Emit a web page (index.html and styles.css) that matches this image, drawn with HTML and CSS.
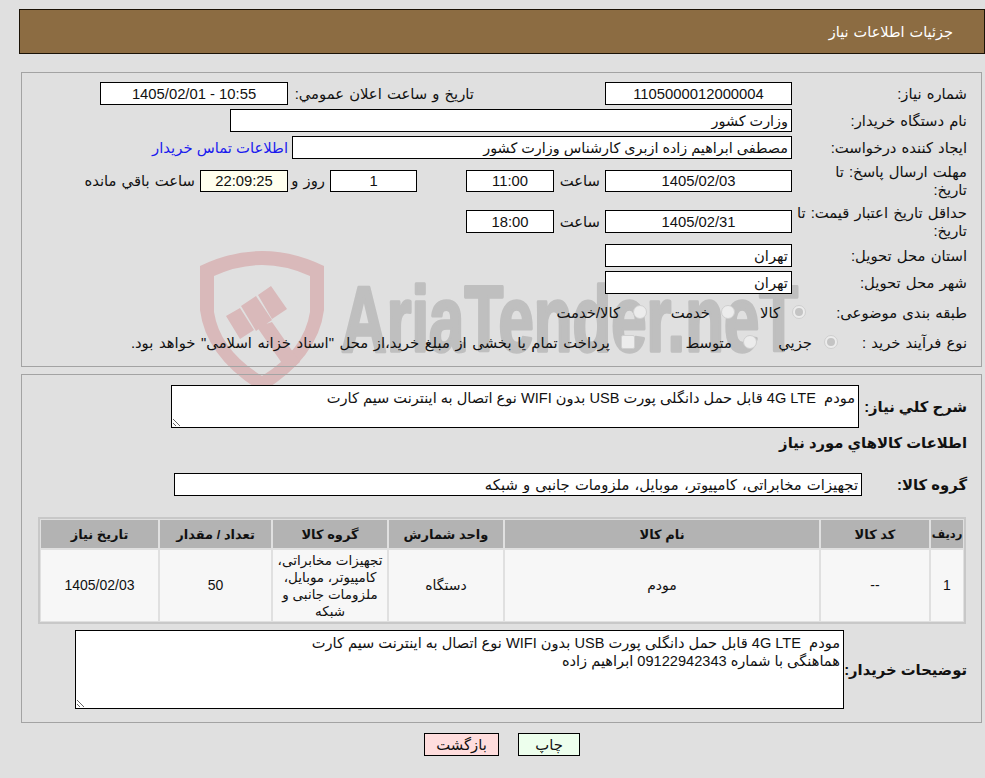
FILE: index.html
```
<!DOCTYPE html>
<html lang="fa" dir="rtl">
<head>
<meta charset="utf-8">
<title>جزئیات اطلاعات نیاز</title>
<link rel="stylesheet" href="styles.css">
</head>
<body>
<svg class="watermark" width="985" height="400" viewBox="0 0 985 400" aria-hidden="true">
  <path class="wm-shield" fill-rule="evenodd" d="M200 266Q262 236 324 266L324 310Q318 358 262 392Q206 358 200 310ZM214 276L214 312Q220 350 262 376Q304 350 310 312L310 276Q262 254 214 276Z"/>
  <path class="wm-shield" d="M226 316L240 308L254 330L240 339ZM241 306L256 296L272 320L256 331ZM258 295L271 286L287 309L272 319ZM257 327L272 322L300 362L288 372Z"/>
  <text class="wm-text" x="341" y="351" textLength="457" lengthAdjust="spacingAndGlyphs">AriaTender.neT</text>
</svg>
<header class="title-bar">جزئیات اطلاعات نیاز</header>
<main class="page">
  <section class="panel panel-info">
    <div class="row row-first">
      <span class="lbl">شماره نیاز:</span>
      <input class="field w187" readonly value="1105000012000004">
      <span class="text m131">تاریخ و ساعت اعلان عمومي:</span>
      <input class="field w188 push" readonly value="10:55 - 1405/02/01">
    </div>
    <div class="row">
      <span class="lbl">نام دستگاه خریدار:</span>
      <input class="field wide1 start tight" readonly value="وزارت کشور">
    </div>
    <div class="row">
      <span class="lbl">ایجاد کننده درخواست:</span>
      <input class="field wide2 start tight" readonly value="مصطفی ابراهیم زاده ازبری کارشناس وزارت کشور">
      <a class="link" href="#">اطلاعات تماس خریدار</a>
    </div>
    <div class="row row-tall">
      <span class="lbl">مهلت ارسال پاسخ: تا<br>تاریخ:</span>
      <input class="field w187 h22" readonly value="1405/02/03">
      <span class="text hour">ساعت</span>
      <input class="field w88 h22" readonly value="11:00">
      <input class="field w87 h22 m49" readonly value="1">
      <span class="text day">روز و</span>
      <input class="field w88 h22 count" readonly value="22:09:25">
      <span class="text m5">ساعت باقي مانده</span>
    </div>
    <div class="row row-tall2">
      <span class="lbl">حداقل تاریخ اعتبار قیمت: تا<br>تاریخ:</span>
      <input class="field w187" readonly value="1405/02/31">
      <span class="text hour">ساعت</span>
      <input class="field w88" readonly value="18:00">
    </div>
    <div class="row">
      <span class="lbl">استان محل تحویل:</span>
      <input class="field w187 start" readonly value="تهران">
    </div>
    <div class="row">
      <span class="lbl">شهر محل تحویل:</span>
      <input class="field w187 start" readonly value="تهران">
    </div>
    <div class="row row-radio">
      <span class="lbl">طبقه بندی موضوعی:</span>
      <span class="radio on r-kala"></span><span class="opt o-kala">کالا</span>
      <span class="radio"></span><span class="opt o-khed">خدمت</span>
      <span class="radio"></span><span class="opt o-both">کالا/خدمت</span>
    </div>
    <div class="row row-radio">
      <span class="lbl lbl-process">نوع فرآیند خرید :</span>
      <span class="radio on"></span><span class="opt o-joz">جزيي</span>
      <span class="radio"></span><span class="opt o-mot">متوسط</span>
      <span class="check"></span><span class="opt o-pay">پرداخت تمام یا بخشی از مبلغ خرید،از محل "اسناد خزانه اسلامی" خواهد بود.</span>
    </div>
  </section>

  <section class="panel panel-goods">
    <div class="row row-desc">
      <span class="lbl-b lbl-desc">شرح كلي نياز:</span>
      <textarea class="area area-desc" readonly>مودم  4G LTE قابل حمل دانگلی پورت USB بدون WIFI نوع اتصال به اینترنت سیم کارت</textarea>
    </div>
    <h2 class="heading">اطلاعات کالاهاي مورد نياز</h2>
    <div class="row row-group">
      <span class="lbl-b lbl-group">گروه کالا:</span>
      <input class="field group start" readonly value="تجهیزات مخابراتی، کامپیوتر، موبایل، ملزومات جانبی و شبکه">
    </div>
    <table class="goods">
      <colgroup>
        <col class="c1"><col class="c2"><col class="c3"><col class="c4"><col class="c5"><col class="c6"><col class="c7">
      </colgroup>
      <thead>
        <tr><th class="th-narrow">ردیف</th><th>کد کالا</th><th>نام کالا</th><th>واحد شمارش</th><th>گروه کالا</th><th>تعداد / مقدار</th><th>تاریخ نیاز</th></tr>
      </thead>
      <tbody>
        <tr><td>1</td><td>--</td><td>مودم</td><td>دستگاه</td><td class="cell-group">تجهیزات مخابراتی، کامپیوتر، موبایل، ملزومات جانبی و شبکه</td><td>50</td><td>1405/02/03</td></tr>
      </tbody>
    </table>
    <div class="row row-notes">
      <span class="lbl-b lbl-notes">توضیحات خریدار:</span>
      <textarea class="area area-notes" readonly>مودم  4G LTE قابل حمل دانگلی پورت USB بدون WIFI نوع اتصال به اینترنت سیم کارت
هماهنگی با شماره 09122942343 ابراهیم زاده</textarea>
    </div>
  </section>

  <div class="actions">
    <button class="btn btn-print" type="button">چاپ</button>
    <button class="btn btn-back" type="button">بازگشت</button>
  </div>
</main>
</body>
</html>
```
FILE: styles.css
```
html {
  background: #e0e0e0;
}
body {
  margin: 0;
  width: 985px;
  height: 778px;
  overflow: hidden;
  position: relative;
  font-family: "Liberation Sans", "DejaVu Sans", sans-serif;
  font-size: 14.8px;
  word-spacing: 1px;
  color: #111;
  line-height: 18px;
}
.watermark {
  position: absolute;
  left: 0;
  top: 0;
  z-index: -1;
  direction: ltr;
}
.wm-shield {
  fill: #d9b9ba;
}
.wm-text {
  fill: #bfbfbf;
  stroke: #bfbfbf;
  stroke-width: 3.5px;
  stroke-linejoin: round;
  font-family: "Liberation Sans", sans-serif;
  font-weight: 700;
  font-size: 93px;
  word-spacing: 0;
}
.title-bar {
  box-sizing: border-box;
  height: 45px;
  margin: 9px 0 0 19px;
  padding: 13px 31px 0 0;
  background: #8c6c42;
  border: 1px solid #1a1206;
  color: #fff;
  font-size: 14.5px;
}
.page {
  margin: 18px 3px 0 3px;
  padding-left: 18px;
}
.panel {
  box-sizing: border-box;
  border: 1px solid #a3a3a3;
}
.panel-info {
  height: 295px;
  padding: 9px 14px 0 0;
}
.panel-goods {
  height: 349px;
  margin-top: 7px;
  padding: 10px 14px 0 0;
}
.row {
  display: flex;
  align-items: center;
  margin-bottom: 4px;
}
.row-first {
  padding-left: 78px;
}
.lbl {
  width: 175px;
  flex: none;
  box-sizing: border-box;
}
.row-tall {
  height: 34px;
  margin: 5px 0;
}
.row-tall2 {
  height: 35px;
  margin: 6px 0 5px;
}
.field {
  box-sizing: border-box;
  flex: none;
  height: 23px;
  padding: 0 3px;
  border: 1px solid #000;
  background: #fff;
  font: inherit;
  word-spacing: 0;
  color: #111;
  text-align: center;
  outline: none;
}
.start {
  text-align: right;
}
.tight {
  font-size: 14.4px;
}
.h22 {
  height: 22px;
}
.w187 { width: 187px; }
.w188 { width: 188px; }
.w88 { width: 88px; }
.w87 { width: 87px; }
.wide1 { width: 562px; }
.wide2 { width: 500px; }
.group {
  width: 688px;
  word-spacing: 1px;
}
.text {
  flex: none;
  white-space: nowrap;
}
.m131 { margin-right: 131px; }
.push { margin-right: auto; }
.hour { width: 46px; margin-right: 5px; }
.m49 { margin-right: 49px; }
.day { width: 37px; margin-right: 5px; }
.count { background: #ffffee; }
.m5 { margin-right: 5px; }
.link {
  margin-right: 4px;
  color: #1a1aee;
  text-decoration: none;
  white-space: nowrap;
  word-spacing: 0;
}
.row-radio {
  height: 30px;
  margin: 0;
}
.radio,
.check {
  flex: none;
  box-sizing: border-box;
  width: 14px;
  height: 14px;
  margin-top: -3px;
  background: #ececec;
  border: 1px solid #cfcfcf;
}
.radio {
  border-radius: 50%;
  position: relative;
}
.radio.on::after {
  content: "";
  position: absolute;
  inset: 2px;
  border-radius: 50%;
  background: #c4c4c4;
}
.check {
  border-radius: 2px;
}
.opt {
  flex: none;
  white-space: nowrap;
}
.r-kala { margin-right: -14px; }
.o-kala { width: 45px; margin-right: 12px; }
.o-khed { width: 63px; margin-right: 11px; }
.o-both { margin-right: 13px; }
.lbl-process { width: 129px; }
.o-joz { width: 55px; margin-right: 12px; }
.o-mot { width: 97px; margin-right: 11px; }
.o-pay { margin-right: 11px; word-spacing: 1.5px; }
.lbl-b {
  flex: none;
  font-weight: 700;
  white-space: nowrap;
  word-spacing: 0;
}
.area {
  box-sizing: border-box;
  display: block;
  flex: none;
  border: 1px solid #000;
  background: #fff;
  font: inherit;
  font-size: 14.6px;
  word-spacing: 0;
  color: #111;
  padding: 3px;
  outline: none;
}
.row-desc {
  margin-bottom: 0;
}
.lbl-desc { width: 108px; }
.area-desc {
  width: 688px;
  height: 43px;
}
.heading {
  margin: 6px 0 0;
  height: 24px;
  font-size: inherit;
  font-weight: 700;
  word-spacing: 0;
}
.row-group {
  margin: 15px 0 0;
}
.lbl-group {
  width: 105px;
}
.goods {
  box-sizing: border-box;
  width: 928px;
  margin: 21px 1px 0 0;
  table-layout: fixed;
  border-collapse: separate;
  border-spacing: 2px;
  border: 1px solid #c8c8c8;
  box-shadow: inset 0 0 0 1px #c8c8c8;
  font-size: 14px;
  line-height: 17px;
  word-spacing: 0;
}
.c1 { width: 32px; }
.c2 { width: 108px; }
.c3 { width: 314px; }
.c4 { width: 114px; }
.c5 { width: 114px; }
.c6 { width: 111px; }
.c7 { width: 117px; }
.goods th {
  height: 28px;
  padding: 0;
  font-size: 13px;
  background: #b3b3b3;
}
.goods .th-narrow {
  font-size: 11.5px;
}
.goods td {
  height: 71px;
  padding: 0;
  background: #f7f7f7;
  text-align: center;
}
.goods .cell-group {
  padding: 0 2px;
  font-size: 13.5px;
}
.row-notes {
  margin: 6px 0 0;
}
.lbl-notes { width: 123px; }
.area-notes {
  width: 769px;
  height: 79px;
}
.actions {
  display: flex;
  justify-content: flex-start;
  gap: 19px;
  margin: 10px 402px 0 0;
}
.btn {
  box-sizing: border-box;
  flex: none;
  height: 23px;
  padding: 0;
  border: 1px solid #000;
  font: inherit;
  color: #111;
}
.btn-print {
  width: 62px;
  background: #edffed;
}
.btn-back {
  width: 75px;
  background: #ffdddd;
}
```
